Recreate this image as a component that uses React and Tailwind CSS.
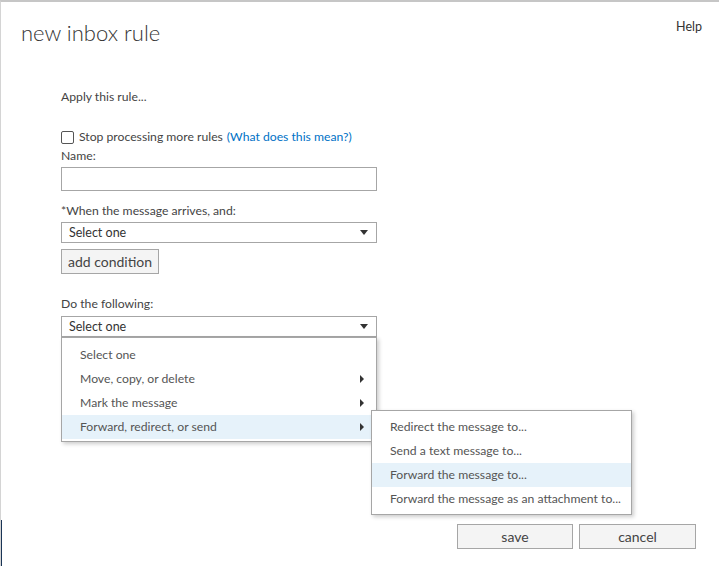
import React from "react";

const font = { fontFamily: 'Lato, "Noto Sans", sans-serif' };

function DownArrow() {
  return (
    <svg width="8" height="5" viewBox="0 0 8 5" className="block">
      <path d="M0 0 L8 0 L4 5 Z" fill="#333" />
    </svg>
  );
}

function RightArrow() {
  return (
    <svg width="4" height="8" viewBox="0 0 4 8" className="block">
      <path d="M0 0 L4 4 L0 8 Z" fill="#333" />
    </svg>
  );
}

function Select() {
  return (
    <div className="flex h-[21px] w-[316px] items-center justify-between border border-[#a6a6a6] bg-white pl-[7px] pr-[8px] text-[12.5px] text-[#333]">
      <span>Select one</span>
      <DownArrow />
    </div>
  );
}

export default function App() {
  const mainItems = [
    { t: "Select one", arrow: false },
    { t: "Move, copy, or delete", arrow: true },
    { t: "Mark the message", arrow: true },
    { t: "Forward, redirect, or send", arrow: true, hl: true },
  ];
  const subItems = [
    { t: "Redirect the message to..." },
    { t: "Send a text message to..." },
    { t: "Forward the message to...", hl: true },
    { t: "Forward the message as an attachment to..." },
  ];
  return (
    <div
      className="relative flex h-[566px] w-[719px] flex-col overflow-hidden whitespace-nowrap border-l border-t-2 border-l-[#d4d4d4] border-t-[#c6c6c6] bg-white text-[#333]"
      style={font}
    >
      <div className="absolute bottom-0 left-[-1px] h-[46px] w-[2px] bg-[#1a3556]" />
      <div className="flex items-start justify-between pl-[20px] pr-[17px] pt-[17px]">
        <div className="text-[22px] font-light leading-[28px] text-[#333]">
          new inbox rule
        </div>
        <div className="text-[12.5px] leading-[16px] text-[#333]">Help</div>
      </div>

      <div className="ml-[60px] flex w-[316px] flex-col text-[12.2px] leading-[16px]">
        <div className="mt-[42px] text-[#444]">Apply this rule...</div>
        <div className="mt-[24px] flex h-[16px] items-center">
          <div className="h-[13px] w-[13px] rounded-[2px] border border-[#555] bg-white" />
          <span className="ml-[5px] text-[#444]">Stop processing more rules</span>
          <span className="ml-[4px] text-[#0072c6]">(What does this mean?)</span>
        </div>
        <div className="mt-[3px] text-[#444]">Name:</div>
        <div className="mt-[3px] h-[24px] w-[316px] border border-[#a6a6a6] bg-white" />
        <div className="mt-[12px] text-[#444]">*When the message arrives, and:</div>
        <div className="mt-[3px]">
          <Select />
        </div>
        <div className="mt-[6px] flex h-[25px] w-[98px] items-center justify-center border border-[#a6a6a6] bg-[#f4f4f4] text-[14px] text-[#444]">
          add condition
        </div>
        <div className="mt-[22px] text-[#444]">Do the following:</div>
        <div className="mt-[4px]">
          <Select />
        </div>
      </div>

      <div className="mt-auto flex justify-end gap-[6px] pb-[17px] pr-[23px]">
        <div className="flex h-[25px] w-[116px] items-center justify-center border border-[#a6a6a6] bg-[#f4f4f4] text-[14px] text-[#444]">
          save
        </div>
        <div className="flex h-[25px] w-[117px] items-center justify-center border border-[#a6a6a6] bg-[#f4f4f4] text-[14px] text-[#444]">
          cancel
        </div>
      </div>

      {/* main dropdown menu */}
      <div className="absolute left-[60px] top-[335px] h-[105px] w-[316px] border border-[#a6a6a6] bg-white pt-[5px] text-[12.2px] text-[#555] shadow-[2px_2px_4px_rgba(0,0,0,0.2)]">
        {mainItems.map((it) => (
          <div
            key={it.t}
            className={
              "flex h-[24px] items-center justify-between pl-[18px] pr-[12px] " +
              (it.hl ? "bg-[#e6f2fa]" : "")
            }
          >
            <span>{it.t}</span>
            {it.arrow ? <RightArrow /> : null}
          </div>
        ))}
      </div>

      {/* submenu */}
      <div className="absolute left-[370px] top-[408px] h-[105px] w-[261px] border border-[#a6a6a6] bg-white pt-[4px] text-[12.2px] text-[#555] shadow-[2px_2px_4px_rgba(0,0,0,0.2)]">
        {subItems.map((it) => (
          <div
            key={it.t}
            className={
              "flex h-[24px] items-center pl-[18px] " + (it.hl ? "bg-[#e6f2fa]" : "")
            }
          >
            <span>{it.t}</span>
          </div>
        ))}
      </div>
    </div>
  );
}
